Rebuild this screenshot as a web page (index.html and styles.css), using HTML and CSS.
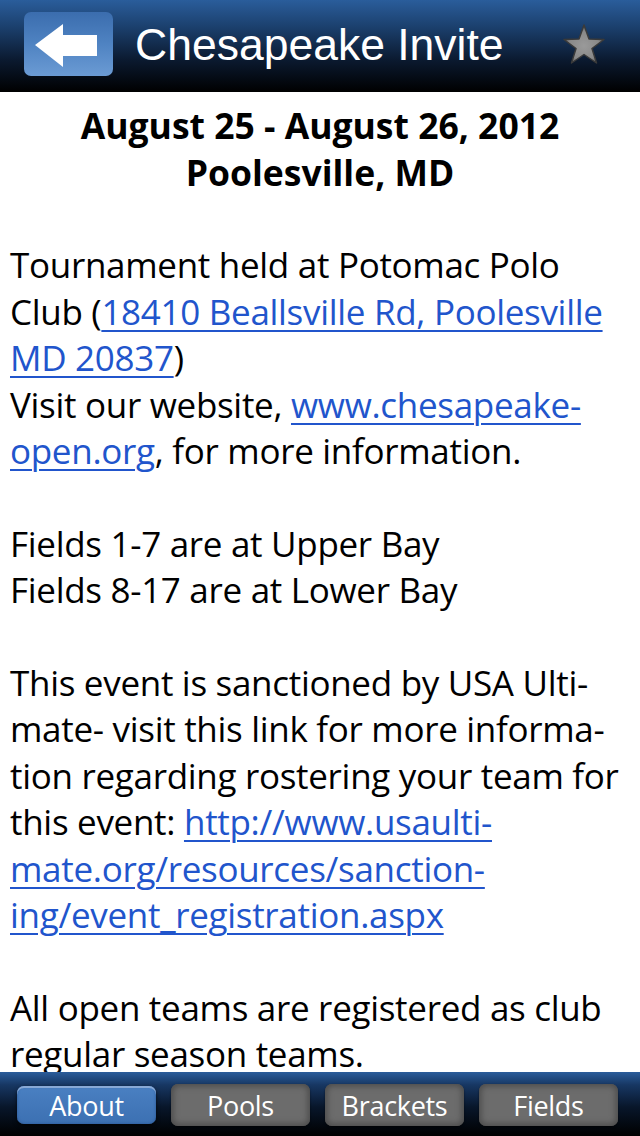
FILE: index.html
```html
<!DOCTYPE html>
<html>
<head>
<meta charset="utf-8">
<link rel="stylesheet" href="styles.css">
</head>
<body>
<div class="screen">
  <header class="topbar">
    <div class="back-btn">
      <svg width="89" height="64" viewBox="0 0 89 64"><polygon points="11,33 39,12 39,23 73,23 73,44 39,44 39,55" fill="#fff"/></svg>
    </div>
    <div class="title">Chesapeake Invite</div>
    <div class="star">
      <svg width="44" height="44" viewBox="0 0 44 44">
        <defs>
          <radialGradient id="sg" cx="50%" cy="55%" r="55%">
            <stop offset="0%" stop-color="#9a9a9a"/>
            <stop offset="70%" stop-color="#888"/>
            <stop offset="100%" stop-color="#555"/>
          </radialGradient>
        </defs>
        <polygon points="22,2 27,16 42,16.5 30,25.5 34.5,40 22,31.5 9.5,40 14,25.5 2,16.5 17,16" fill="url(#sg)" stroke="#3a3a3a" stroke-width="1.5" stroke-linejoin="round"/>
      </svg>
    </div>
  </header>
  <main class="content">
    <h1 class="dates">August 25 - August 26, 2012<br>Poolesville, MD</h1>
    <p class="para">Tournament held at Potomac Polo<br>Club (<a href="#">18410 Beallsville Rd, Poolesville<br>MD 20837</a>)<br>Visit our website, <a href="#">www.chesapeake-<br>open.org</a>, for more information.</p>
    <p class="para">Fields 1-7 are at Upper Bay<br>Fields 8-17 are at Lower Bay</p>
    <p class="para">This event is sanctioned by USA Ulti-<br>mate- visit this link for more informa-<br>tion regarding rostering your team for<br>this event: <a href="#">http://www.usaulti-<br>mate.org/resources/sanction-<br>ing/event_registration.aspx</a></p>
    <p class="para">All open teams are registered as club<br>regular season teams.</p>
  </main>
  <nav class="tabbar">
    <div class="tab active">About</div>
    <div class="tab">Pools</div>
    <div class="tab">Brackets</div>
    <div class="tab">Fields</div>
  </nav>
</div>
</body>
</html>
```
FILE: styles.css
```css
html, body {
  margin: 0;
  padding: 0;
  background: #fff;
}
.screen {
  width: 640px;
  height: 1136px;
  display: flex;
  flex-direction: column;
  overflow: hidden;
  font-family: "Open Sans", "Noto Sans", sans-serif;
}
.topbar {
  height: 92px;
  flex: 0 0 92px;
  display: flex;
  align-items: center;
  background: linear-gradient(to bottom, #2a5d9b 0%, #1b3f6c 30%, #0b1a30 65%, #000 100%);
  padding-left: 24px;
  box-sizing: border-box;
}
.back-btn {
  width: 89px;
  height: 64px;
  margin-top: -4px;
  border-radius: 7px;
  background: linear-gradient(to bottom, #3b6dae 0%, #4f83c2 50%, #6b9bd4 100%);
  display: flex;
}
.title {
  margin-left: 22px;
  margin-top: -2px;
  font-family: "Liberation Sans", Arial, sans-serif;
  font-size: 44.5px;
  color: #fff;
}
.star {
  margin-left: auto;
  margin-right: 34px;
  margin-top: -2px;
  display: flex;
}
.content {
  flex: 1;
  overflow: hidden;
  padding: 10px 10px 0 10px;
  color: #000;
}
.dates {
  margin: 0;
  text-align: center;
  font-size: 35.5px;
  font-weight: 700;
  line-height: 47px;
  letter-spacing: 0;
}
.para {
  margin: 46.4px 0 0 0;
  font-size: 35px;
  line-height: 46.4px;
  letter-spacing: -0.3px;
  white-space: nowrap;
}
.para a {
  color: #2155cc;
  text-decoration: underline;
  text-decoration-thickness: 2px;
  text-underline-offset: 5px;
}
.tabbar {
  flex: 0 0 64px;
  height: 64px;
  box-sizing: border-box;
  padding: 12px 22px 10px 17px;
  display: grid;
  grid-template-columns: repeat(4, 1fr);
  gap: 15px;
  background: linear-gradient(to bottom, #2b5d9b 0%, #173763 20%, #08162a 55%, #000 100%);
}
.tab {
  border-radius: 7px;
  background: #6c6c6c;
  box-shadow: inset 0 0 6px 2px #4a4a4a, 0 1px 2px rgba(0,0,0,0.6);
  color: #fff;
  font-size: 27px;
  display: flex;
  align-items: center;
  justify-content: center;
  letter-spacing: -0.3px;
}
.tab.active {
  background: linear-gradient(to bottom, #4a80c2 0%, #3c70b2 100%);
  box-shadow: inset 0 2px 0 #88a9d6, inset 0 0 3px #2a5590, 0 2px 4px rgba(0,0,0,0.7);
  margin: 2px 0;
}
```
